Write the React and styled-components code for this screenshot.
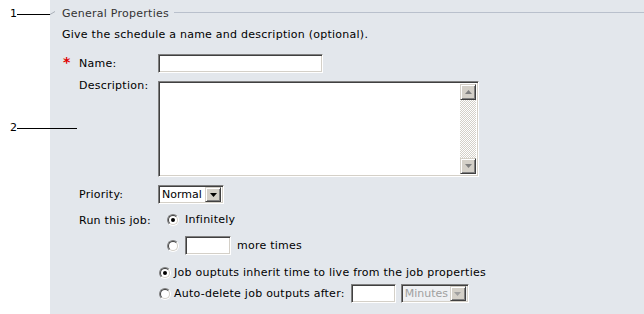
import styled, { createGlobalStyle } from "styled-components";

const GlobalStyle = createGlobalStyle`
  html, body { margin: 0; padding: 0; background: #fff; }
`;

const Page = styled.div`
  position: relative;
  display: flex;
  width: 644px;
  height: 314px;
  background: #fff;
  font-family: "DejaVu Sans", Verdana, sans-serif;
  font-size: 11px;
  letter-spacing: 0.25px;
  color: #000;
  overflow: hidden;
`;

const Gutter = styled.div`
  width: 50px;
  flex-shrink: 0;
`;

const Panel = styled.div`
  flex: 1;
  background: #e3e7ec;
  padding: 7px 0 0 12px;
`;

const Legend = styled.div`
  display: flex;
  height: 14px;
  line-height: 14px;
  color: #333;

  &::after {
    content: "";
    flex: 1;
    height: 1px;
    margin: 5px 0 0 5px;
    background: #b9c0cc;
  }
`;

const Intro = styled.div`
  margin-top: 7px;
  line-height: 14px;
`;

const FormGrid = styled.div`
  display: grid;
  grid-template-columns: 17px 79px 1fr;
  row-gap: 8px;
  align-items: center;
  margin-top: 12px;
`;

const Req = styled.span`
  align-self: start;
  margin-top: 1px;
  color: #e00000;
  font-weight: bold;
  font-size: 14px;
  line-height: 14px;
  padding-left: 1px;
`;

const Label = styled.span`
  line-height: 14px;
  align-self: ${(p) => (p.$top ? "start" : "center")};
  margin-top: ${(p) => p.$offset || 0}px;
`;

const Field = styled.div`
  display: flex;
  align-items: center;
`;

const Sunken = styled.div`
  box-sizing: border-box;
  border: 1px solid;
  border-color: #808080 #fff #fff #808080;
  box-shadow: inset 1px 1px #404040, inset -1px -1px #d4d0c8;
`;

const TextInput = styled(Sunken).attrs({ as: "input" })`
  width: ${(p) => p.$w}px;
  height: 19px;
  padding: 0 3px;
  background: #fff;
  font: inherit;
  outline: none;
`;

const AreaBox = styled(Sunken)`
  display: flex;
  width: 321px;
  height: 96px;
  padding: 2px;
  background: #fff;
`;

const AreaText = styled.textarea`
  flex: 1;
  border: none;
  outline: none;
  resize: none;
  padding: 1px 2px;
  font: inherit;
  background: transparent;
`;

const ScrollBar = styled.div`
  display: flex;
  flex-direction: column;
  width: 16px;
  background: repeating-conic-gradient(#d4d0c8 0 25%, #fff 0 50%) 0 0 / 2px 2px;
`;

const Track = styled.div`
  flex: 1;
`;

const RaisedButton = styled.div`
  box-sizing: border-box;
  display: flex;
  align-items: center;
  justify-content: center;
  width: 16px;
  height: ${(p) => p.$h || 16}px;
  background: #d4d0c8;
  border: 1px solid;
  border-color: #d4d0c8 #404040 #404040 #d4d0c8;
  box-shadow: inset 1px 1px #fff, inset -1px -1px #808080;
`;

const SelectBox = styled(Sunken)`
  display: flex;
  align-items: center;
  width: ${(p) => p.$w}px;
  height: 19px;
  padding: 2px;
  background: ${(p) => (p.$disabled ? "#eef0f3" : "#fff")};
  color: ${(p) => (p.$disabled ? "#a0a0a0" : "#000")};
`;

const SelectValue = styled.span`
  flex: 1;
  padding-left: 1px;
  line-height: 15px;
  letter-spacing: 0;
  white-space: nowrap;
  overflow: hidden;
`;

const Options = styled.div`
  display: flex;
  flex-direction: column;
`;

const OptionRow = styled.div`
  display: flex;
  align-items: center;
  gap: ${(p) => p.$gap}px;
  height: ${(p) => p.$h}px;
  margin-top: ${(p) => p.$mt || 0}px;
  margin-left: ${(p) => p.$indent || 0}px;
  line-height: 14px;
  white-space: nowrap;
`;

const RadioDot = styled.span`
  position: relative;
  box-sizing: border-box;
  width: 12px;
  height: 12px;
  flex-shrink: 0;
  border-radius: 50%;
  border: 1px solid;
  border-color: #808080 #fff #fff #808080;

  &::before {
    content: "";
    position: absolute;
    inset: 0;
    border-radius: 50%;
    border: 1px solid;
    border-color: #404040 #d4d0c8 #d4d0c8 #404040;
    background: #fff;
  }

  &::after {
    content: "";
    position: absolute;
    left: 3px;
    top: 3px;
    width: 4px;
    height: 4px;
    border-radius: 50%;
    background: #000;
    display: ${(p) => (p.$checked ? "block" : "none")};
  }
`;

const Callout = styled.div`
  position: absolute;
  left: 10px;
  top: ${(p) => p.$y - 7}px;
  display: flex;
  align-items: center;
  height: 14px;
  line-height: 14px;
  color: #000;
`;

function Arrow({ dir = "down", color = "#000" }) {
  const d = dir === "down" ? "M0 0H7L3.5 4Z" : "M0 4H7L3.5 0Z";
  return (
    <svg width="7" height="4" viewBox="0 0 7 4">
      <path d={d} fill={color} />
    </svg>
  );
}

function Select({ value, w, disabled }) {
  return (
    <SelectBox $w={w} $disabled={disabled}>
      <SelectValue>{value}</SelectValue>
      <RaisedButton $h={15}>
        <Arrow color={disabled ? "#a0a0a0" : "#000"} />
      </RaisedButton>
    </SelectBox>
  );
}

function CalloutLine({ length, tail }) {
  return (
    <svg width={length + 6} height="14" viewBox={`0 0 ${length + 6} 14`}>
      <line x1="0" y1="7.5" x2={length} y2="7.5" stroke="#000" strokeWidth="1" />
      {tail && <line x1={length} y1="7.5" x2={length + 5} y2="4.5" stroke="#aab0b8" strokeWidth="1" />}
    </svg>
  );
}

export default function App() {
  return (
    <>
      <GlobalStyle />
      <Page>
        <Gutter />
        <Panel>
          <Legend>General Properties</Legend>
          <Intro>Give the schedule a name and description (optional).</Intro>

          <FormGrid>
            <Req>*</Req>
            <Label>Name:</Label>
            <Field>
              <TextInput $w={165} />
            </Field>

            <span />
            <Label $top $offset={-2}>Description:</Label>
            <Field>
              <AreaBox>
                <AreaText />
                <ScrollBar>
                  <RaisedButton>
                    <Arrow dir="up" color="#808080" />
                  </RaisedButton>
                  <Track />
                  <RaisedButton>
                    <Arrow color="#808080" />
                  </RaisedButton>
                </ScrollBar>
              </AreaBox>
            </Field>

            <span />
            <Label>Priority:</Label>
            <Field>
              <Select value="Normal" w={66} />
            </Field>

            <span />
            <Label $top $offset={2}>Run this job:</Label>
            <Options>
              <OptionRow $h={16} $gap={6} $indent={9}>
                <RadioDot $checked />
                <span>Infinitely</span>
              </OptionRow>
              <OptionRow $h={19} $gap={6} $indent={9} $mt={8}>
                <RadioDot />
                <TextInput $w={46} />
                <span>more times</span>
              </OptionRow>
              <OptionRow $h={16} $gap={3} $mt={10} $indent={1}>
                <RadioDot $checked />
                <span>Job ouptuts inherit time to live from the job properties</span>
              </OptionRow>
              <OptionRow $h={19} $gap={3} $mt={3} $indent={1}>
                <RadioDot />
                <span>Auto-delete job outputs after:</span>
                <OptionRow $h={19} $gap={5} $indent={3}>
                  <TextInput $w={45} />
                  <Select value="Minutes" w={68} disabled />
                </OptionRow>
              </OptionRow>
            </Options>
          </FormGrid>
        </Panel>

        <Callout $y={14}>
          1
          <CalloutLine length={33} tail />
        </Callout>
        <Callout $y={128}>
          2
          <CalloutLine length={60} />
        </Callout>
      </Page>
    </>
  );
}
